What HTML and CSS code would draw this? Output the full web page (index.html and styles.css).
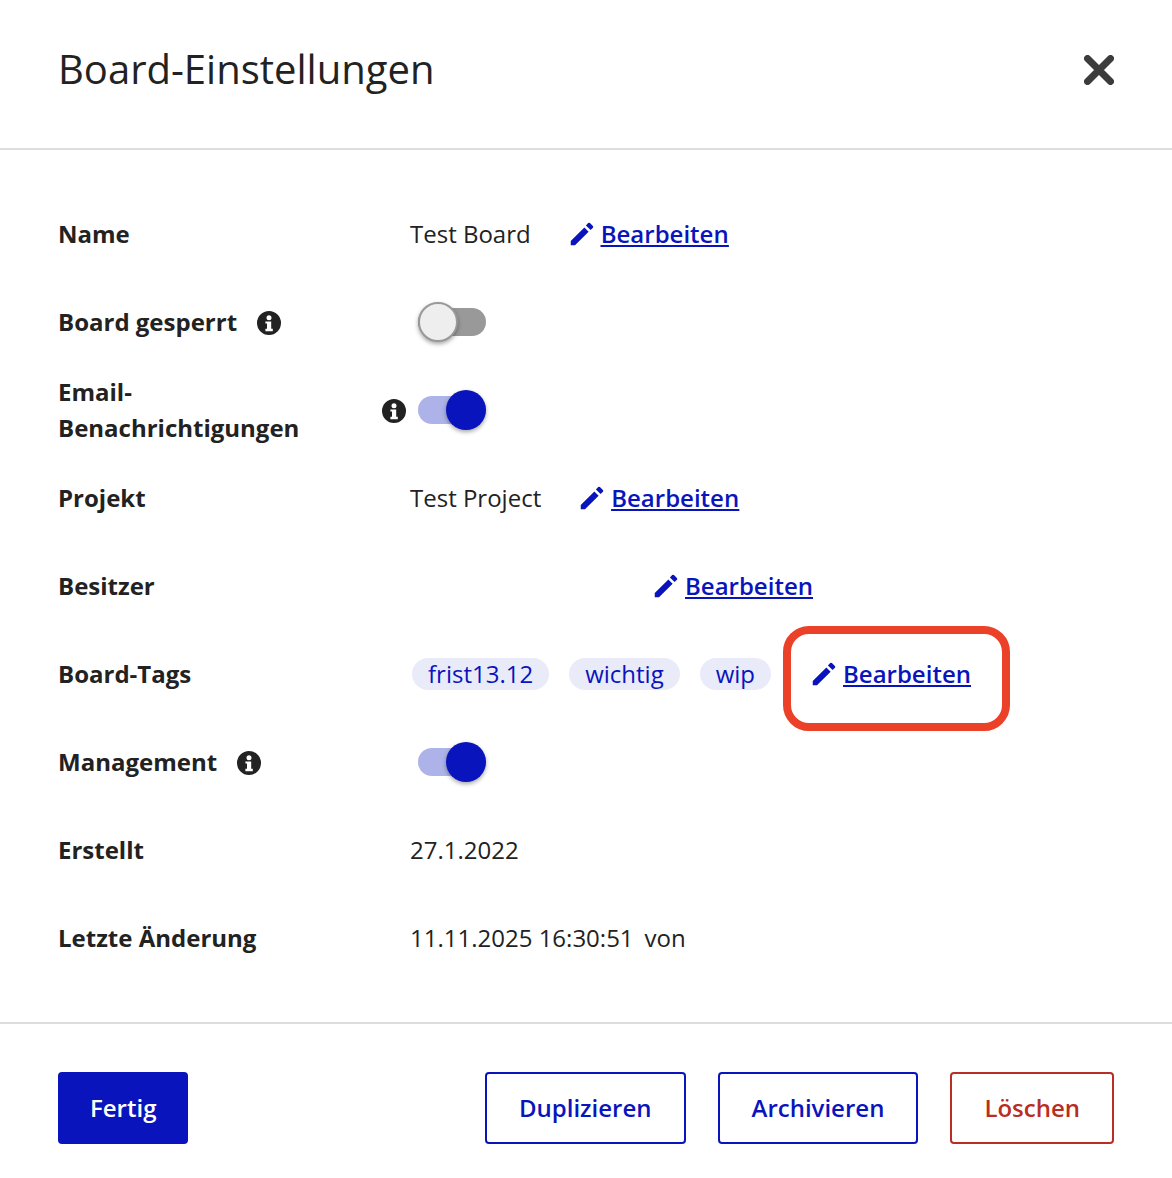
FILE: index.html
```html
<!DOCTYPE html>
<html lang="de">
<head>
<meta charset="utf-8">
<title>Board-Einstellungen</title>
<link rel="stylesheet" href="styles.css">
</head>
<body>
<svg class="defs" width="0" height="0" aria-hidden="true">
  <symbol id="pencil" viewBox="0 0 24 24"><path d="M3 17.6V21h3.4L17.3 10.1l-3.4-3.4L3 17.6zM20.71 7.04a1 1 0 0 0 0-1.41l-2.34-2.34a1 1 0 0 0-1.41 0l-1.83 1.83 3.75 3.75 1.83-1.83z"/></symbol>
  <symbol id="info" viewBox="0 0 24 24"><path fill-rule="evenodd" d="M12 0a12 12 0 1 0 0 24 12 12 0 0 0 0-24zm0 4.2a2.5 2.5 0 1 1 0 5 2.5 2.5 0 0 1 0-5zM8.4 10.4h5.8v7.4h1.6v2.4H8.4v-2.4H10v-5.2H8.4z"/></symbol>
</svg>
<main class="dialog">
  <header class="header">
    <h1 class="title">Board-Einstellungen</h1>
    <button class="close" type="button" aria-label="Schließen">
      <svg viewBox="0 0 30 30" width="30" height="30"><path d="M3.5 3.5l23 23M26.5 3.5l-23 23"/></svg>
    </button>
  </header>
  <section class="body">
    <div class="row">
      <div class="label-cell"><span class="label">Name</span></div>
      <div class="value-cell"><span>Test Board</span><a class="edit" href="#"><svg class="pencil"><use href="#pencil"/></svg><span class="edit-text">Bearbeiten</span></a></div>
    </div>
    <div class="row">
      <div class="label-cell"><span class="label">Board gesperrt</span><svg class="info"><use href="#info"/></svg></div>
      <div class="value-cell"><span class="switch switch-off"><span class="thumb"></span></span></div>
    </div>
    <div class="row">
      <div class="label-cell"><span class="label">Email-Benachrichtigungen</span><svg class="info"><use href="#info"/></svg></div>
      <div class="value-cell"><span class="switch switch-on"><span class="thumb"></span></span></div>
    </div>
    <div class="row">
      <div class="label-cell"><span class="label">Projekt</span></div>
      <div class="value-cell"><span>Test Project</span><a class="edit" href="#"><svg class="pencil"><use href="#pencil"/></svg><span class="edit-text">Bearbeiten</span></a></div>
    </div>
    <div class="row">
      <div class="label-cell"><span class="label">Besitzer</span></div>
      <div class="value-cell"><span class="owner"></span><a class="edit" href="#"><svg class="pencil"><use href="#pencil"/></svg><span class="edit-text">Bearbeiten</span></a></div>
    </div>
    <div class="row">
      <div class="label-cell"><span class="label">Board-Tags</span></div>
      <div class="value-cell">
        <div class="tags"><span class="tag">frist13.12</span><span class="tag">wichtig</span><span class="tag">wip</span></div>
        <a class="edit edit-marked" href="#"><svg class="pencil"><use href="#pencil"/></svg><span class="edit-text">Bearbeiten</span><span class="marker"></span></a>
      </div>
    </div>
    <div class="row">
      <div class="label-cell"><span class="label">Management</span><svg class="info"><use href="#info"/></svg></div>
      <div class="value-cell"><span class="switch switch-on"><span class="thumb"></span></span></div>
    </div>
    <div class="row">
      <div class="label-cell"><span class="label">Erstellt</span></div>
      <div class="value-cell"><span>27.1.2022</span></div>
    </div>
    <div class="row">
      <div class="label-cell"><span class="label">Letzte Änderung</span></div>
      <div class="value-cell"><span>11.11.2025 16:30:51</span><span class="by">von</span></div>
    </div>
  </section>
  <footer class="footer">
    <button class="btn btn-primary" type="button">Fertig</button>
    <div class="actions">
      <button class="btn btn-outline" type="button">Duplizieren</button>
      <button class="btn btn-outline" type="button">Archivieren</button>
      <button class="btn btn-danger" type="button">Löschen</button>
    </div>
  </footer>
</main>
</body>
</html>
```
FILE: styles.css
```css
* { box-sizing: border-box; }
html, body { margin: 0; padding: 0; background: #fff; }
body { font-family: "Open Sans", sans-serif; font-size: 24px; line-height: 36px; color: #222; }
.defs { position: absolute; }
.dialog { width: 1172px; }
.header { height: 150px; padding: 0 58px; display: flex; align-items: center; justify-content: space-between; border-bottom: 2px solid #ddd; }
.title { margin: 0; font-size: 40px; font-weight: 400; line-height: 48px; position: relative; top: -5px; }
.close { border: 0; background: none; padding: 0; width: 30px; height: 30px; position: relative; top: -4px; }
.close svg { display: block; }
.close path { fill: none; stroke: #3c3c3c; stroke-width: 7; stroke-linecap: round; }
.body { padding: 48px 58px; display: flex; flex-direction: column; gap: 16px; border-bottom: 2px solid #ddd; }
.row { display: grid; grid-template-columns: 352px 1fr; min-height: 72px; }
.label-cell { display: flex; align-items: center; padding-right: 4px; }
.label { font-weight: 700; }
.info { width: 24px; height: 24px; margin-left: 20px; margin-top: 2px; flex: none; fill: #222; }
.value-cell { display: flex; align-items: center; }
.edit { display: flex; align-items: center; margin-left: 36px; color: #0a14bd; position: relative; }
.pencil { width: 30px; height: 30px; fill: #0a14bd; }
.edit-text { margin-left: 4px; text-decoration: underline; font-weight: 600; }
.owner { width: 205px; }
.tags { display: flex; gap: 20px; margin: 0 2px; }
.tag { height: 32px; line-height: 32px; padding: 0 16px; border-radius: 16px; background: #e9ebf9; color: #0a14bd; }
.by { margin-left: 11px; }
.marker { position: absolute; left: -26px; top: -30px; width: 227px; height: 105px; border: 8px solid #ea4128; border-radius: 26px; pointer-events: none; }
.switch { position: relative; display: block; width: 68px; height: 28px; margin-left: 8px; border-radius: 14px; }
.thumb { position: absolute; top: -6px; width: 40px; height: 40px; border-radius: 50%; box-shadow: 0 2px 4px rgba(0,0,0,.35); }
.switch-off { background: #999; }
.switch-off .thumb { left: 0; background: #eee; border: 2px solid #999; }
.switch-on { background: #adb3e8; }
.switch-on .thumb { right: 0; background: #0a14bd; }
.footer { padding: 48px 58px; display: flex; justify-content: space-between; }
.actions { display: flex; gap: 32px; }
.btn { height: 72px; padding: 0 32px; border-radius: 4px; font: 600 24px/36px "Open Sans", sans-serif; background: #fff; border: 2px solid #0a14bd; color: #0a14bd; }
.btn-primary { background: #0a14bd; color: #fff; border: 0; }
.btn-danger { border-color: #b92d22; color: #b92d22; }
```
